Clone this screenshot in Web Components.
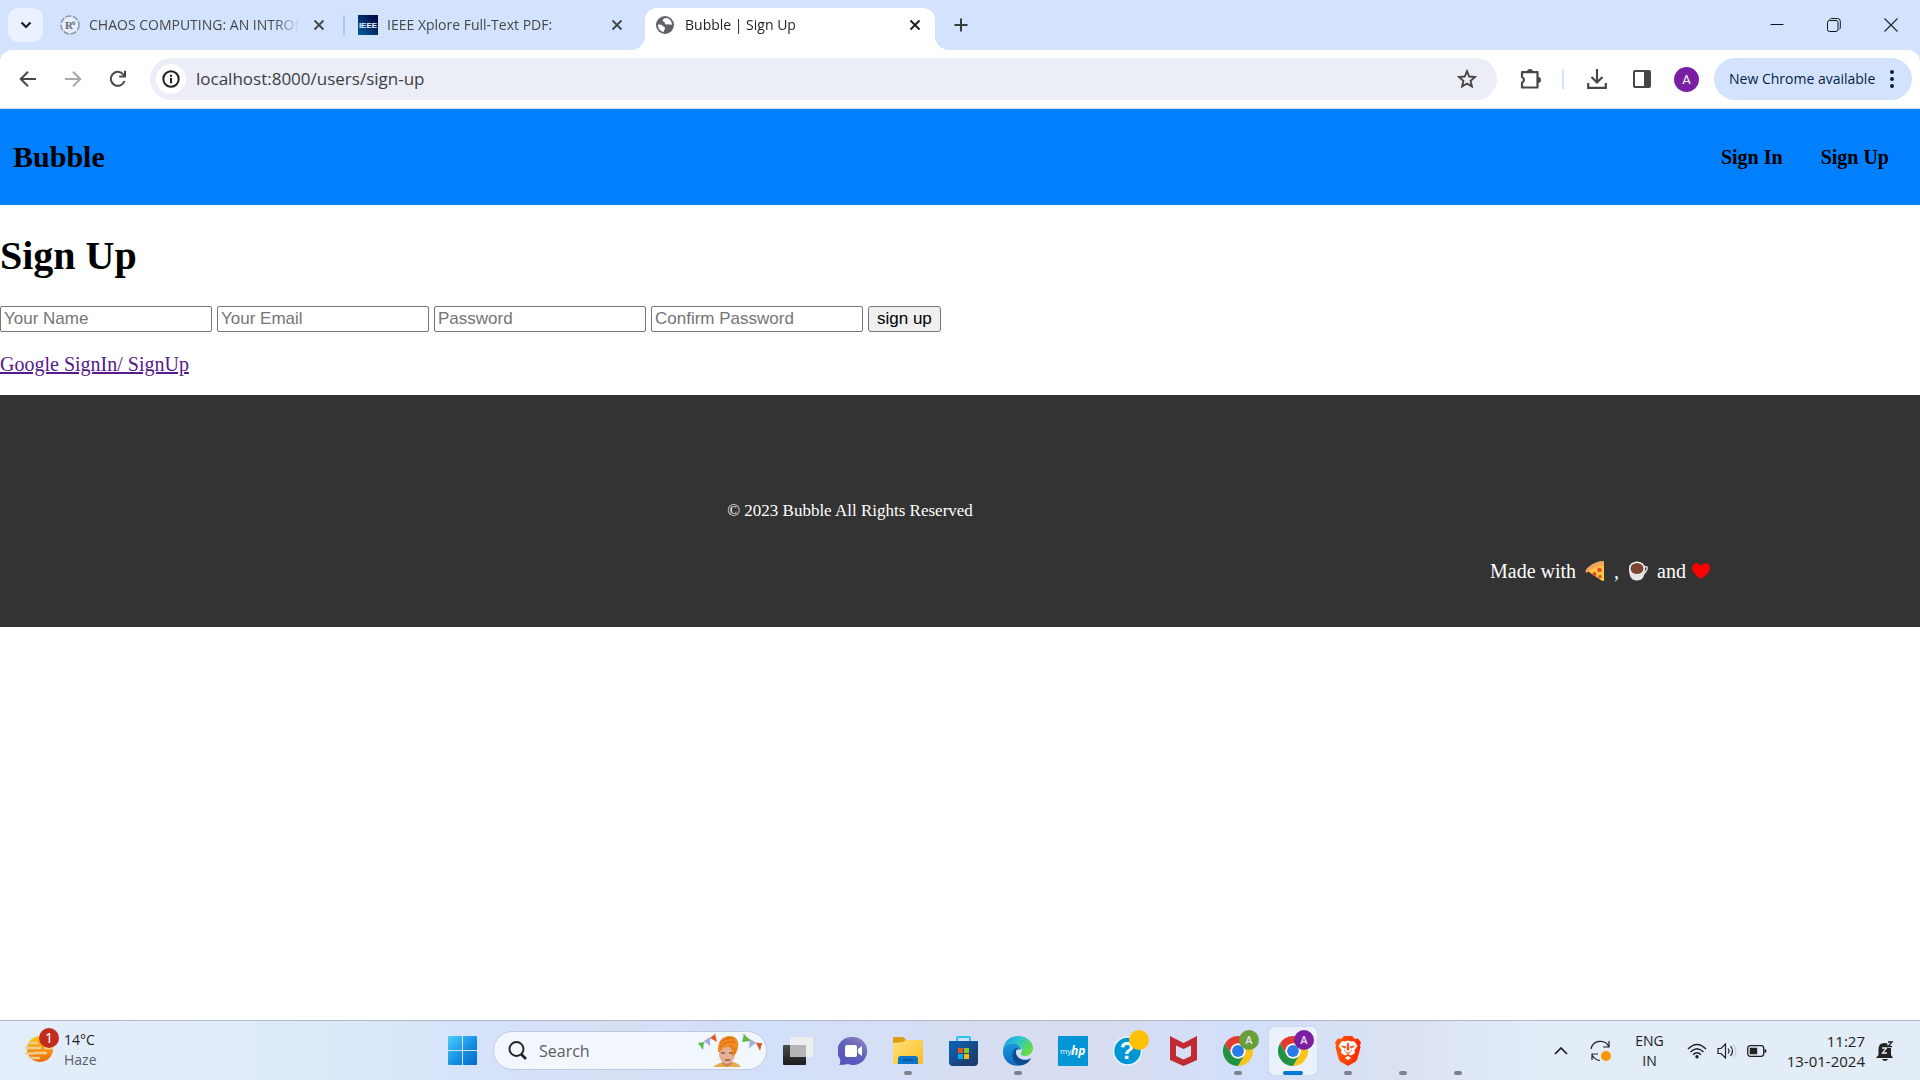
<!DOCTYPE html>
<html lang="en">
<head>
<meta charset="utf-8">
<title>Bubble | Sign Up</title>
<style>
  body {
    margin: 0;
    background: #fff;
    font-family: "Liberation Serif", "Times New Roman", serif;
    --ui-font: "Open Sans", "Noto Sans", sans-serif;
    --frame: #d3e3fd;
  }
</style>
</head>
<body>
<desktop-shell>
  <browser-tabs slot="browser">
    <browser-tab icon="research">CHAOS COMPUTING: AN INTRODUCTION</browser-tab>
    <browser-tab icon="ieee" divider>IEEE Xplore Full-Text PDF:</browser-tab>
    <browser-tab icon="globe" active>Bubble | Sign Up</browser-tab>
  </browser-tabs>
  <browser-toolbar slot="browser"></browser-toolbar>
  <site-nav></site-nav>
  <sign-up-form></sign-up-form>
  <site-footer></site-footer>
  <task-bar slot="taskbar"></task-bar>
</desktop-shell>

<script>
const ICONS = {
  chevron: ['12 12', `<path d="M1.500 3.500L6 8l4.500-4.500" fill="none" stroke="#1f1f1f" stroke-width="2.200"/>`],
  close: ['12 12', `<path d="M1.5 1.5l9 9M10.5 1.5l-9 9" fill="none" stroke="currentColor" stroke-width="1.9"/>`],
  plus: ['14 14', `<path d="M7 .5v13M.5 7h13" stroke="#3c3c3c" stroke-width="2"/>`],
  research: ['20 20', `<circle cx="10" cy="10" r="9" fill="#e9eff8" stroke="#8b98aa" stroke-width="1.6" stroke-dasharray="6 1.5"/><text x="5" y="14" font-family="Liberation Serif" font-weight="700" font-size="11" fill="#5f6b7a">R</text><text x="12" y="10" font-family="Liberation Serif" font-weight="700" font-size="7" fill="#5f6b7a">6</text>`],
  ieee: ['20 20', `<defs><linearGradient id="g" x1="1" y1="0" x2="0" y2="1"><stop stop-color="#000040"/><stop offset=".5" stop-color="#002c6c"/><stop offset="1" stop-color="#00629b"/></linearGradient></defs><path fill="url(#g)" d="M0 0h20v20H0z"/><text x="10" y="13" text-anchor="middle" font-family="Liberation Sans" font-weight="700" font-size="8" fill="#e8f4ff">IEEE</text>`],
  globe: ['18 18', `<circle cx="9" cy="9" r="9" fill="#5f6368"/><path d="M2 8.5c2 .1 4.2.3 5 1.5.8 1.300 2 .6 2 2.200 0 1.300-1.200 1.300-1.200 3.700C4.200 15.500 1.800 12.400 2 8.500zM10.500 2c-2.700.1-4 1.600-3.700 3 .3 1 1.900.6 2 1.900.1 1 1.200 1.800 2.500 1.500 1.800-.4 2.700.5 4.700.2C15.900 5.200 13.700 2.600 10.500 2z" fill="#fff"/>`],
  minimize: ['14 14', `<path d="M.5 6.500h13" stroke="#111" stroke-width="1"/>`],
  restore: ['14 14', `<rect x=".5" y="2.500" width="10.500" height="11" rx="2" fill="none" stroke="#111"/><path d="M2.500 1.500q.5-1 2-1h6a2.800 2.800 0 0 1 2.800 2.800v6.200q0 1.500-1 2" fill="none" stroke="#111"/>`],
  winclose: ['14 14', `<path d="M.5.5l13 13M13.500.5l-13 13" stroke="#222" stroke-width="1.100"/>`],
  back: ['18 18', `<path d="M17 9H2M9 1.700L1.700 9 9 16.300" fill="none" stroke="#474747" stroke-width="2"/>`],
  forward: ['18 18', `<path d="M1 9h15M9 1.700L16.300 9 9 16.300" fill="none" stroke="#a9a9a9" stroke-width="2"/>`],
  reload: ['18 18', `<path d="M15.500 11A7 7 0 1 1 14 4.100l2 2" fill="none" stroke="#474747" stroke-width="2"/><path d="M17 .8v6.800h-6.800v-2H15V.8z" fill="#474747"/>`],
  info: ['18 18', `<circle cx="9" cy="9" r="7.700" fill="none" stroke="#1f1f1f" stroke-width="2"/><path d="M9 8v5.300M9 4.700v2" stroke="#1f1f1f" stroke-width="2"/>`],
  star: ['20 20', `<path d="M10 2.200l2.200 5.300 5.800.5-4.400 3.800 1.300 5.700-4.900-3-4.900 3 1.300-5.700L2 8l5.800-.5z" fill="none" stroke="#474747" stroke-width="1.900"/>`],
  puzzle: ['22 22', `<path d="M2 4.200h15.500v15.300H2v-4.700a3.200 3.200 0 0 0 0-5.900z" fill="none" stroke="#474747" stroke-width="2.200" stroke-linejoin="round"/><path d="M7 4a3 3 0 0 1 6 0zM18 9a3 3 0 0 1 0 6z" fill="#474747"/>`],
  download: ['20 20', `<path d="M10 0v13M4.500 8l5.500 5.500L15.500 8M1.200 14v4.800h17.600V14" fill="none" stroke="#474747" stroke-width="2.200"/>`],
  panel: ['18 18', `<rect x="1" y="1" width="16" height="16" rx="1" fill="none" stroke="#474747" stroke-width="2"/><path d="M11 1h6v16h-6z" fill="#474747"/>`],
  dots: ['6 20', `<g fill="#041e49"><circle cx="3" cy="3" r="2"/><circle cx="3" cy="10" r="2"/><circle cx="3" cy="17" r="2"/></g>`],
  pizza: ['20 20', `<path d="M1 9Q8 1 18 0q1 0 1 2v17q0 1.500-2 .8z" fill="#ffc83d"/><path d="M1 12Q-.5 9 3 6.500 9.500.5 18 0q1.300.2.800 4.500Q9 6 1 12z" fill="#f2a55f"/><g fill="#e8442e"><circle cx="14.500" cy="9" r="2.300"/><circle cx="9.500" cy="13" r="2"/><circle cx="15" cy="15.500" r="1.700"/></g>`],
  coffee: ['20 20', `<path d="M15 7q5-3 4 1-1 4-5 5" fill="none" stroke="#d5d5d5" stroke-width="1.600"/><path d="M1 7c0 8 2 12.500 8 12.500S17 15 17 7z" fill="#e6e6e6"/><ellipse cx="9" cy="7" rx="8" ry="6.500" fill="#f5f5f5"/><ellipse cx="9" cy="7.500" rx="6.500" ry="5.500" fill="#7d4533"/>`],
  heart: ['18 16', `<path d="M9 16C5 13 0 9.500 0 5c0-5 6.500-6.500 9-2 2.500-4.500 9-3 9 2 0 4.500-5 8-9 11z" fill="#f00"/>`],
  weather: ['36 36', `<defs><linearGradient id="g" x2="0" y2="1"><stop stop-color="#fbc912"/><stop offset="1" stop-color="#f06a0c"/></linearGradient></defs><circle cx="16" cy="21" r="13" fill="url(#g)"/><g stroke="#edcf93" stroke-width="2.400" stroke-linecap="round"><path d="M6 15h7M2 20h14M10 25h12M2 25.500h8M21 20h7M6 30h9"/></g><circle cx="25" cy="10" r="10" fill="#c42b1c"/><text x="25" y="15" text-anchor="middle" font-family="Noto Sans" font-size="14" fill="#fff">1</text>`],
  windows: ['29 29', `<defs><linearGradient id="g" x2="1" y2="1"><stop stop-color="#4cd0fb"/><stop offset=".5" stop-color="#1a94e4"/><stop offset="1" stop-color="#0067c9"/></linearGradient></defs><path fill="url(#g)" d="M1 0h13v14H0V1q0-1 1-1zM15 0h13q1 0 1 1v13H15zM0 15h14v14H1q-1 0-1-1zM15 15h14v13q0 1-1 1H15z"/>`],
  search: ['19 19', `<circle cx="8.500" cy="8" r="7" fill="none" stroke="#222" stroke-width="1.900"/><path d="M13 13l5 5" stroke="#222" stroke-width="2.600"/>`],
  festival: ['64 34', `<path d="M0 10q10-1 18-10M44 0q8 8 20 10" fill="none" stroke="#a9b8c7" stroke-width=".8"/><path d="M0 9l6-1-1 8zM44 8l2-8 7 7z" fill="#5fb945"/><path d="M6 7l6-4v9zM52 5l6 4-7 5z" fill="#a4abd4"/><path d="M12 4l5-4 2 8zM58 9l6 0-2 8z" fill="#dd5a2e"/><path d="M15 33q5-4 10-5l10 0q5 1 8 5z" fill="#e6ac45"/><path d="M24 21v9l5 3 5-3v-9z" fill="#ca8564"/><ellipse cx="29" cy="20" rx="8" ry="10" fill="#e5b093"/><path d="M20 18q-1-14 10-16 8-1 10 6 1 7-3 13l-3 1q1-6-3-9-5-1-9 5z" fill="#f28a20"/><path d="M22 9q7-6 14-5M22 13q7-7 15-5M32 12q5 1 5 7" fill="none" stroke="#cf6812"/><path d="M23 19h4m4 0h4M27 26h5" stroke="#5d3526"/>`],
  taskview: ['30 28', `<defs><linearGradient id="g" x2="0" y2="1"><stop stop-color="#4b4b4b"/><stop offset="1" stop-color="#1c1c1c"/></linearGradient></defs><rect y="8" width="23" height="20" rx="1" fill="url(#g)"/><rect x="7" width="23" height="20" rx="1" fill="#eee"/><path d="M7 8h16v12H7z" fill="#b5b5b5"/>`],
  chat: ['30 30', `<defs><linearGradient id="g" x1="1" x2=".3" y2="1"><stop stop-color="#9b8bc0"/><stop offset=".5" stop-color="#6264ba"/><stop offset="1" stop-color="#5a50bd"/></linearGradient></defs><path d="M15 1a14 14 0 1 1-5 27q-4 1-9 1 2-2 1-6A14 14 0 0 1 15 1z" fill="url(#g)"/><rect x="7" y="9" width="12" height="12" rx="2" fill="#fff"/><path d="M20 13l4-3v10l-4-3z" fill="#fff"/>`],
  explorer: ['30 27', `<defs><linearGradient id="g" x2="1" y2="1"><stop stop-color="#ffe17a"/><stop offset="1" stop-color="#fbbd21"/></linearGradient></defs><path d="M1 0h9l3 3v5H0V1q0-1 1-1z" fill="#dd9e0c"/><path d="M0 6l10-1 3-2h16q1 0 1 1v22q0 1-1 1H0z" fill="url(#g)"/><path d="M5 27v-5q0-3 3-3h14q3 0 3 3v5z" fill="#0c75c8"/><path d="M10 23h10" stroke="#074a91" stroke-width="1.300"/>`],
  store: ['29 30', `<defs><linearGradient id="g" x2="1" y2="1"><stop stop-color="#0a66b9"/><stop offset="1" stop-color="#20335d"/></linearGradient></defs><path d="M8 6V2q0-1 1-1h11q1 0 1 1v4" fill="none" stroke="#2bc3f3" stroke-width="2"/><path d="M0 5h29v21q0 4-4 4H4q-4 0-4-4z" fill="url(#g)"/><path d="M9 12h5v5H9z" fill="#f1511b"/><path d="M15 12h5v5h-5z" fill="#80cc28"/><path d="M9 18h5v5H9z" fill="#00adef"/><path d="M15 18h5v5h-5z" fill="#fbbc09"/>`],
  edge: ['30 30', `<defs><linearGradient id="g" x2="1" y2=".5"><stop stop-color="#1c9be0"/><stop offset=".5" stop-color="#2cc4cf"/><stop offset="1" stop-color="#66de43"/></linearGradient><linearGradient id="h" x2="0" y2="1"><stop stop-color="#1996dd"/><stop offset="1" stop-color="#0d6ac0"/></linearGradient></defs><path d="M0 14C1 5 7 0 15 0c9 0 15 6 15 12 0 5-4 8-8 8-3 0-5-1-4-3 2-2 1-8-6-9C6 7 1 10 0 14z" fill="url(#g)"/><path d="M0 14c1-4 5-6.500 10-6.500 5 0 8 3 8 6-7-1-8 5-6 9 2 4 6 6 9 6-9 4-22-1-21-14.500z" fill="url(#h)"/><path d="M13 12c-5 3-5 12 1 16 6 3 12-1 14-6-6 4-14 1-15-5-.2-2 .2-4 2-4.800z" fill="#0c4c91"/>`],
  hp: ['30 30', `<rect width="30" height="30" rx="1" fill="#0096d6"/><text x="2" y="18" font-family="Open Sans" font-size="8" fill="#fff">my</text><text x="13" y="19" font-family="Open Sans" font-weight="700" font-style="italic" font-size="12" fill="#fff">hp</text>`],
  help: ['36 36', `<circle cx="14.500" cy="21" r="14" fill="#0096d6" stroke="#e8f6fc" stroke-width="1.600"/><text x="14" y="29" text-anchor="middle" font-family="Liberation Sans" font-weight="700" font-size="24" fill="#fff">?</text><circle cx="26" cy="10" r="10" fill="#ffc107"/>`],
  mcafee: ['27 30', `<path fill-rule="evenodd" d="M0 0l13.500 7L27 0v24l-13.500 6L0 24zM6 9.500v10.500l7.500 3.500 7.500-3.500V9.500L13.500 13z" fill="#c02a32"/>`],
  chromegreen: ['36 36', chromeLogo('#689f38')],
  chromepurple: ['36 36', chromeLogo('#7b1fa2')],
  brave: ['26 30', `<defs><linearGradient id="g" x2="1"><stop stop-color="#ff5a0a"/><stop offset="1" stop-color="#ff2600"/></linearGradient></defs><path d="M6 3l3-3h8l3 3 3-.5 3 4-1 3 .5 2-3 11q-.5 2-2.500 3.500L13 30l-7-4q-2-1.500-2.500-3.500l-3-11L1 9.500l-1-3 3-4z" fill="url(#g)"/><path d="M7 5l3 .5 3-1 3 1 3-.5 3.500 5-3 4 .5 3-4 2.500-3-1.500-3 1.500L6 17l.5-3-3-4zM13 20l3 1.800-3 2.400-3-2.400z" fill="#fff"/><path d="M6.500 10l4.500.8-1.500 1.400zM19.500 10l-4.500.8 1.500 1.400zM12.400 7h1.200l.4 6.500-1 1-1-1zM9 14l1.800 2.500M17 14l-1.800 2.500M11 16.500l2 1 2-1" fill="#ff4310" stroke="#ff4310" stroke-width=".7"/>`],
  caret: ['14 8', `<path d="M1 7l6-6 6 6" fill="none" stroke="#1c1c1c" stroke-width="1.700"/>`],
  sync: ['22 22', `<path d="M1 9a9.500 9.500 0 0 1 18-2M19 1v6h-6M2 20v-6h6M2 15q3 5 8 5.500" fill="none" stroke="#222" stroke-width="1.200"/><circle cx="16" cy="16" r="5" fill="#ff9500"/>`],
  wifi: ['20 16', `<path d="M1 6q9-9 18 0M3.500 9q6.500-6.500 13 0M6 11.700q4-4 8 0" fill="none" stroke="#222" stroke-width="1.400"/><circle cx="10" cy="13.700" r="1.700" fill="#222"/>`],
  volume: ['20 16', `<path d="M1 5.500h3L8.500 1v14L4 10.500H1zM11 5.500q2 2.500 0 5M13.500 3q4 5 0 10" fill="none" stroke="#222" stroke-width="1.200"/><path d="M16 1q6 7 0 14" fill="none" stroke="#b9c5d1"/>`],
  battery: ['20 12', `<rect x=".7" y=".7" width="16" height="10.600" rx="2.500" fill="none" stroke="#222" stroke-width="1.300"/><path d="M2.700 2.700h7.500v6.600H2.700zM17.500 4q2 0 2 2t-2 2z" fill="#222"/>`],
  bell: ['18 20', `<path d="M2.500 14V8q0-6 6-6 6.500 0 6.500 6v6l2 3H0zM6 18h6q-1 2-3 2t-3-2z" fill="#222"/><path d="M11 0h6v7h-5z" fill="#e2edf8"/><path d="M12 1h4l-4 4.500h4" fill="none" stroke="#222" stroke-width="1.300"/><path d="M6 7h4.500L6.500 12H11" fill="none" stroke="#e2edf8" stroke-width="1.300"/>`],
};

function chromeLogo(badge) {
  return `<g transform="translate(0 6) scale(.625)">
    <path d="M24 12h20.800A24 24 0 0 0 3.200 12l10.400 18A12 12 0 0 1 24 12z" fill="#e33b2e"/>
    <path d="M44.800 12A24 24 0 0 1 24 48l10.400-18A12 12 0 0 0 24 12z" fill="#fcc31a"/>
    <path d="M3.200 12A24 24 0 0 0 24 48l10.400-18a12 12 0 0 1-20.800 0z" fill="#229342"/>
    <circle cx="24" cy="24" r="12" fill="#fff"/><circle cx="24" cy="24" r="9.500" fill="#2a7bea"/></g>
    <circle cx="26" cy="10" r="10" fill="${badge}"/>
    <text x="26" y="14" text-anchor="middle" font-family="Roboto" font-size="11" font-weight="500" fill="#e9e4ee">A</text>`;
}

class AppIcon extends HTMLElement {
  constructor() {
    super();
    this.attachShadow({ mode: 'open' });
  }

  connectedCallback() {
    const [size, shapes] = ICONS[this.getAttribute('name')];
    const [w, h] = size.split(' ');
    this.shadowRoot.innerHTML = `
      <style>
        :host { display: block; flex: none; }
        svg { display: block; }
      </style>
      <svg width="${w}" height="${h}" viewBox="0 0 ${w} ${h}" aria-hidden="true">${shapes}</svg>
    `;
  }
}

class DesktopShell extends HTMLElement {
  constructor() {
    super();
    this.attachShadow({ mode: 'open' });
    this.shadowRoot.innerHTML = `
      <style>
        :host { display: flex; flex-direction: column; min-height: 100vh; }
        main { flex: 1; }
      </style>
      <slot name="browser"></slot>
      <main><slot></slot></main>
      <slot name="taskbar"></slot>
    `;
  }
}

class BrowserTabs extends HTMLElement {
  constructor() {
    super();
    this.attachShadow({ mode: 'open' });
    this.shadowRoot.innerHTML = `
      <style>
        :host {
          display: flex;
          align-items: flex-end;
          height: 50px;
          padding-left: 8px;
          background: var(--frame);
          font-family: var(--ui-font);
        }
        button {
          display: flex;
          align-items: center;
          justify-content: center;
          height: 34px;
          margin: 0 0 8px;
          padding: 0;
          border: 0;
          background: none;
        }
        .list { width: 35px; margin-right: 6px; border-radius: 10px; background: #ebf1fe; }
        .tabs { display: flex; gap: 8px; }
        .new { width: 36px; margin-left: 8px; }
        .window { display: flex; margin-left: auto; padding-right: 1px; }
        .window button { width: 57px; }
      </style>
      <button class="list" aria-label="Search tabs"><app-icon name="chevron"></app-icon></button>
      <div class="tabs"><slot></slot></div>
      <button class="new" aria-label="New tab"><app-icon name="plus"></app-icon></button>
      <div class="window">
        <button aria-label="Minimize"><app-icon name="minimize"></app-icon></button>
        <button aria-label="Restore"><app-icon name="restore"></app-icon></button>
        <button aria-label="Close"><app-icon name="winclose"></app-icon></button>
      </div>
    `;
  }
}

class BrowserTab extends HTMLElement {
  constructor() {
    super();
    this.attachShadow({ mode: 'open' });
  }

  connectedCallback() {
    this.shadowRoot.innerHTML = `
      <style>
        :host {
          position: relative;
          display: flex;
          align-items: center;
          box-sizing: border-box;
          width: 290px;
          height: 42px;
          padding: 0 10px 8px 11px;
          border-radius: 12px 12px 0 0;
          color: #474747;
          font-size: 14px;
          line-height: 20px;
        }
        :host([active]) { background: #fff; color: #1f1f1f; }
        :host([active])::before,
        :host([active])::after {
          content: "";
          position: absolute;
          bottom: 0;
          width: 14px;
          height: 14px;
        }
        :host([active])::before { right: 100%; background: radial-gradient(circle at 0 0, transparent 14px, #fff 14px); }
        :host([active])::after { left: 100%; background: radial-gradient(circle at 100% 0, transparent 14px, #fff 14px); }
        :host([divider])::before {
          content: "";
          position: absolute;
          left: -4px;
          top: 7px;
          width: 2px;
          height: 20px;
          background: #a8c7fa;
        }
        .icon { width: 20px; margin-right: 9px; }
        .title {
          flex: 1;
          overflow: hidden;
          white-space: nowrap;
          mask-image: linear-gradient(to left, transparent, #000 24px);
        }
        button {
          display: flex;
          align-items: center;
          justify-content: center;
          width: 20px;
          height: 20px;
          margin-left: 10px;
          padding: 0;
          border: 0;
          background: none;
          color: inherit;
        }
      </style>
      <div class="icon"><app-icon name="${this.getAttribute('icon')}"></app-icon></div>
      <div class="title"><slot></slot></div>
      <button aria-label="Close tab"><app-icon name="close"></app-icon></button>
    `;
  }
}

class BrowserToolbar extends HTMLElement {
  constructor() {
    super();
    this.attachShadow({ mode: 'open' });
    this.shadowRoot.innerHTML = `
      <style>
        :host { display: block; background: var(--frame); font-family: var(--ui-font); }
        .bar {
          display: flex;
          align-items: center;
          height: 58px;
          padding: 0 8px 0 5px;
          border-bottom: 1px solid #dcdfe4;
          border-radius: 12px 12px 0 0;
          background: #fff;
        }
        button {
          display: flex;
          align-items: center;
          justify-content: center;
          width: 45px;
          height: 42px;
          padding: 0;
          border: 0;
          background: none;
        }
        .address {
          display: flex;
          flex: 1;
          align-items: center;
          height: 42px;
          margin: 0 11px 0 10px;
          padding: 0 8px 0 6px;
          border-radius: 21px;
          background: #ebeef7;
        }
        .address .site { width: 30px; height: 30px; border-radius: 50%; background: #fff; }
        input {
          flex: 1;
          margin-left: 10px;
          padding: 0;
          border: 0;
          outline: 0;
          background: none;
          color: #3b3d42;
          font: 17px/24px var(--ui-font);
        }
        .divider { width: 2px; height: 20px; margin: 0 10px 0 9px; background: #d3e3fd; }
        .avatar span {
          width: 25px;
          border-radius: 50%;
          background: #7b1fa2;
          color: #fff;
          font: 13px/25px Roboto, sans-serif;
        }
        .address .favourite { width: 44px; }
        .update {
          justify-content: space-between;
          width: 198px;
          margin-left: 5px;
          padding: 0 17px 0 15px;
          border-radius: 21px;
          background: var(--frame);
          color: #041e49;
          font: 14px/20px var(--ui-font);
        }
      </style>
      <div class="bar">
        <button aria-label="Back"><app-icon name="back"></app-icon></button>
        <button aria-label="Forward"><app-icon name="forward"></app-icon></button>
        <button aria-label="Reload"><app-icon name="reload"></app-icon></button>
        <div class="address">
          <button class="site" aria-label="Site information"><app-icon name="info"></app-icon></button>
          <input aria-label="Address" value="localhost:8000/users/sign-up" spellcheck="false">
          <button class="favourite" aria-label="Bookmark"><app-icon name="star"></app-icon></button>
        </div>
        <button aria-label="Extensions"><app-icon name="puzzle"></app-icon></button>
        <div class="divider"></div>
        <button aria-label="Downloads"><app-icon name="download"></app-icon></button>
        <button aria-label="Side panel"><app-icon name="panel"></app-icon></button>
        <button class="avatar" aria-label="Profile"><span>A</span></button>
        <button class="update">New Chrome available <app-icon name="dots"></app-icon></button>
      </div>
    `;
  }
}

class SiteNav extends HTMLElement {
  constructor() {
    super();
    this.attachShadow({ mode: 'open' });
    this.shadowRoot.innerHTML = `
      <style>
        :host {
          display: flex;
          align-items: center;
          justify-content: space-between;
          height: 96px;
          padding: 0 31px 0 13px;
          background: #007fff;
        }
        h2 { margin: 0; font-size: 30px; line-height: 34px; }
        nav { display: flex; gap: 38px; }
        a { color: #000; font-size: 20px; line-height: 24px; font-weight: 700; text-decoration: none; }
      </style>
      <h2>Bubble</h2>
      <nav><a href="#sign-in">Sign In</a><a href="#sign-up">Sign Up</a></nav>
    `;
  }
}

class SignUpForm extends HTMLElement {
  constructor() {
    super();
    this.attachShadow({ mode: 'open' });
    this.shadowRoot.innerHTML = `
      <style>
        :host { display: block; font-size: 20px; line-height: 24px; }
        h1 { margin: 0; padding: 28px 0; font-size: 40px; line-height: 45px; }
        form { display: flex; gap: 5px; }
        input, button {
          box-sizing: border-box;
          height: 26px;
          margin: 0;
          border: 1px solid #767676;
          font: 17px/20px "Liberation Sans", Arial, sans-serif;
        }
        input { width: 212px; padding: 0 3px; border-radius: 2px; background: #fff; }
        input::placeholder { color: #757575; }
        button { padding: 0 8px; border-radius: 3px; background: #efefef; color: #000; }
        p { margin: 0; padding: 20px 0 19px; }
        a { color: #551a8b; }
      </style>
      <h1>Sign Up</h1>
      <form>
        <input type="text" placeholder="Your Name" aria-label="Your Name">
        <input type="email" placeholder="Your Email" aria-label="Your Email">
        <input type="password" placeholder="Password" aria-label="Password">
        <input type="password" placeholder="Confirm Password" aria-label="Confirm Password">
        <button type="submit">sign up</button>
      </form>
      <p><a href="#google">Google SignIn/ SignUp</a></p>
    `;
  }
}

class SiteFooter extends HTMLElement {
  constructor() {
    super();
    this.attachShadow({ mode: 'open' });
    this.shadowRoot.innerHTML = `
      <style>
        :host {
          display: flex;
          flex-direction: column;
          gap: 36px;
          padding: 104px 210px 44px 0;
          background: #333;
          color: #fff;
          line-height: 24px;
        }
        p { margin: 0; }
        .copyright { padding-right: 10px; font-size: 17px; text-align: center; }
        .made { display: flex; align-items: center; justify-content: flex-end; gap: 9px; font-size: 20px; }
        .and { display: flex; align-items: center; gap: 6px; }
      </style>
      <p class="copyright">© 2023 Bubble All Rights Reserved</p>
      <p class="made">
        <span>Made with</span>
        <app-icon name="pizza"></app-icon>
        <span>,</span>
        <app-icon name="coffee"></app-icon>
        <span class="and">and <app-icon name="heart"></app-icon></span>
      </p>
    `;
  }
}

class TaskItem extends HTMLElement {
  constructor() {
    super();
    this.attachShadow({ mode: 'open' });
  }

  connectedCallback() {
    const icon = this.getAttribute('icon');
    this.shadowRoot.innerHTML = `
      <style>
        :host { display: block; }
        button {
          position: relative;
          display: flex;
          align-items: center;
          justify-content: center;
          width: 48px;
          height: 48px;
          padding: 0;
          border: 0;
          border-radius: 5px;
          background: none;
        }
        /* badged icons grow up and to the right of the tile's centre */
        :host([badge]) button { padding: 0 0 6px 6px; }
        :host([active]) button { background: #ebf1fb; box-shadow: 0 0 1px #9fa9bb; }
        :host([open]) button::after {
          content: "";
          position: absolute;
          bottom: 0;
          left: 20px;
          width: 8px;
          height: 4px;
          border-radius: 2px;
          background: #7d828c;
        }
        :host([active]) button::after { left: 14px; width: 20px; background: #0078d4; }
      </style>
      <button aria-label="${this.getAttribute('label')}">${icon ? `<app-icon name="${icon}"></app-icon>` : ''}</button>
    `;
  }
}

class TaskBar extends HTMLElement {
  constructor() {
    super();
    this.attachShadow({ mode: 'open' });
    this.shadowRoot.innerHTML = `
      <style>
        :host {
          display: grid;
          grid-template-columns: 1fr auto 1fr;
          align-items: center;
          height: 59px;
          border-top: 1px solid #b0b7c5;
          background: linear-gradient(90deg, #e3eef9, #deebf9 15%, #d5e2f9 25%, #d7dff4 32%, #d3e0f9 40%, #d8dcef 56%, #d2dffa 65%, #dae1f1 73%, #e2edf8 80%, #e2edf8);
          font: 14px/20px var(--ui-font);
          color: #222;
        }
        .weather, .apps, .tray { display: flex; align-items: center; }
        .weather { gap: 4px; padding: 0 0 2px 24px; }
        .weather app-icon { padding-bottom: 8px; }
        .weather div { display: grid; }
        .weather span:last-child { color: #5a6068; }
        .apps { gap: 7px; }
        .search {
          display: flex;
          align-items: center;
          box-sizing: border-box;
          width: 274px;
          height: 39px;
          padding: 0 4px 0 14px;
          border: 1px solid #c1cbe0;
          border-radius: 20px;
          background: #f2f6fd;
        }
        input {
          flex: 1;
          min-width: 0;
          margin-left: 12px;
          padding: 0;
          border: 0;
          background: none;
          font: 16px/24px var(--ui-font);
        }
        input::placeholder { color: #5a5d63; }
        .tray { justify-content: flex-end; padding-right: 26px; }
        .language { margin: 0 23px; text-align: center; }
        .status { display: flex; align-items: center; gap: 10px; }
        .clock { margin: 0 11px 0 20px; font-size: 15px; text-align: right; }
        .tray > app-icon + app-icon { margin-left: 22px; }
      </style>
      <div class="weather">
        <app-icon name="weather"></app-icon>
        <div><span>14°C</span><span>Haze</span></div>
      </div>
      <div class="apps">
        <task-item icon="windows" label="Start"></task-item>
        <div class="search">
          <app-icon name="search"></app-icon>
          <input placeholder="Search" aria-label="Search">
          <app-icon name="festival"></app-icon>
        </div>
        <task-item icon="taskview" label="Task view"></task-item>
        <task-item icon="chat" label="Chat"></task-item>
        <task-item icon="explorer" label="File Explorer" open></task-item>
        <task-item icon="store" label="Microsoft Store"></task-item>
        <task-item icon="edge" label="Microsoft Edge" open></task-item>
        <task-item icon="hp" label="myHP"></task-item>
        <task-item icon="help" label="Support" badge></task-item>
        <task-item icon="mcafee" label="McAfee"></task-item>
        <task-item icon="chromegreen" label="Chrome" badge open></task-item>
        <task-item icon="chromepurple" label="Chrome" badge open active></task-item>
        <task-item icon="brave" label="Brave" open></task-item>
        <task-item label="App" open></task-item>
        <task-item label="App" open></task-item>
      </div>
      <div class="tray">
        <app-icon name="caret"></app-icon>
        <app-icon name="sync"></app-icon>
        <div class="language">ENG<br>IN</div>
        <div class="status">
          <app-icon name="wifi"></app-icon>
          <app-icon name="volume"></app-icon>
          <app-icon name="battery"></app-icon>
        </div>
        <div class="clock">11:27<br>13-01-2024</div>
        <app-icon name="bell"></app-icon>
      </div>
    `;
  }
}

customElements.define('app-icon', AppIcon);
customElements.define('desktop-shell', DesktopShell);
customElements.define('browser-tab', BrowserTab);
customElements.define('browser-tabs', BrowserTabs);
customElements.define('browser-toolbar', BrowserToolbar);
customElements.define('site-nav', SiteNav);
customElements.define('sign-up-form', SignUpForm);
customElements.define('site-footer', SiteFooter);
customElements.define('task-item', TaskItem);
customElements.define('task-bar', TaskBar);
</script>
</body>
</html>
